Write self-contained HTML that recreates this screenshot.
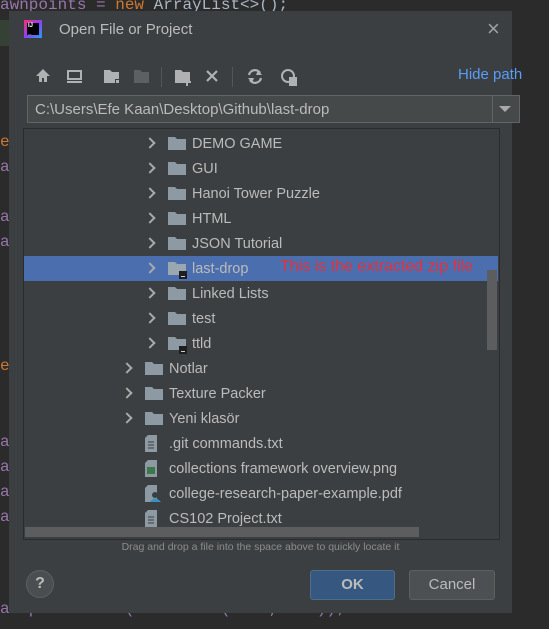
<!DOCTYPE html>
<html><head><style>
body{margin:0;width:549px;height:629px;background:#2b2b2b;position:relative;overflow:hidden;font-family:"Liberation Sans",sans-serif;}
.code{position:absolute;left:0;font-family:"Liberation Mono",monospace;font-size:16px;color:#9876aa;}
.dlg{position:absolute;left:9px;top:11px;width:503px;height:602px;background:#3c3f41;}
.abs{position:absolute;}
.t{position:absolute;color:#bbbbbb;font-size:14px;white-space:nowrap;}
.row{position:absolute;left:0;width:474px;height:25px;}
.row .chev{position:absolute;top:8px;width:6px;height:6px;border-right:2px solid #a9a9a9;border-top:2px solid #a9a9a9;transform:rotate(45deg);}
.row .fold{position:absolute;top:6px;width:18px;height:13px;}
.row .lbl{position:absolute;top:5px;color:#bbbbbb;font-size:14.5px;white-space:nowrap;}
</style></head><body>
<div class="code" style="top:-4px;">awnpoints = <span style="color:#cc7832">new</span> <span style="color:#a9b7c6">ArrayList&lt;&gt;();</span></div>
<div class="abs" style="left:0;top:20px;width:9px;height:26px;background:#344134"></div>
<div class="code" style="top:133px;color:#cc7832">e</div>
<div class="code" style="top:158px">a</div><div class="code" style="top:208px">a</div><div class="code" style="top:233px">a</div>
<div class="code" style="top:357px;color:#cc7832">e</div>
<div class="code" style="top:433px">a</div><div class="code" style="top:458px">a</div><div class="code" style="top:483px">a</div><div class="code" style="top:508px">a</div>
<div class="code" style="top:600px;left:0">awnpoints.add(<span style="color:#cc7832">new</span> Point(-340, 324));</div>
<div class="dlg">
 <div class="abs" style="left:15px;top:9px;width:18px;height:18px;background:linear-gradient(135deg,#ff2d6f,#8f3ff7,#1ea2f5);"><div style="position:absolute;left:3px;top:3px;width:12px;height:12px;background:#000;color:#fff;font-size:6px;font-weight:bold;line-height:7px;padding-left:1px;box-sizing:border-box">IJ<br>_</div></div>
 <div class="t" style="left:50px;top:10px;font-size:15px">Open File or Project</div>
 <div class="t" style="left:478px;top:5px;font-size:22px;color:#a0a0a0">×</div>
 <svg class="abs" style="left:25px;top:54px" width="280" height="24" fill="#afb1b3">
  <path d="M9 4 L2 11 H5 V17 H8 V13 H10 V17 H13 V11 H16Z"/>
  <rect x="34" y="6" width="13" height="8" fill="none" stroke="#afb1b3" stroke-width="2"/><rect x="33" y="16" width="15" height="2"/>
  <path d="M70 5 H76 L78 7 H85 V18 H70Z"/><rect x="81" y="14" width="4" height="4" fill="#3c3f41"/><rect x="82" y="15" width="3" height="3"/>
  <path d="M100 5 H106 L108 7 H115 V18 H100Z" fill="#5d6063"/>
  <rect x="127" y="2" width="1" height="20" fill="#555"/>
  <path d="M141 5 H147 L149 7 H156 V18 H141Z"/><path d="M153 13 V21 M149 17 H157" stroke="#afb1b3" stroke-width="2"/>
  <path d="M173 6 L183 16 M183 6 L173 16" stroke="#afb1b3" stroke-width="2.2"/>
  <rect x="198" y="2" width="1" height="20" fill="#555"/>
  <path d="M215 10 A6 6 0 0 1 226 8 M227 13 A6 6 0 0 1 216 15" stroke="#afb1b3" stroke-width="2.2" fill="none"/><path d="M224 5 L228 10 L222 10Z M218 18 L214 13 L220 13Z"/>
  <circle cx="254" cy="11" r="6" fill="none" stroke="#afb1b3" stroke-width="2"/><rect x="255" y="12" width="8" height="9"/>
 </svg>
 <div class="t" style="left:449px;top:55px;color:#589df6;font-size:15px">Hide path</div>
 <div class="abs" style="left:18px;top:84px;width:493px;height:28px;box-sizing:border-box;border:1px solid #646464;background:#45494a;">
  <div class="t" style="left:7px;top:5px;font-size:15px">C:\Users\Efe Kaan\Desktop\Github\last-drop</div>
  <div class="abs" style="right:0;top:0;width:26px;height:26px;border-left:1px solid #646464"></div>
  <div class="abs" style="right:8px;top:10px;width:0;height:0;border-left:6px solid transparent;border-right:6px solid transparent;border-top:6px solid #a9a9a9"></div>
 </div>
 <div class="abs" style="left:14px;top:117px;width:475px;height:410px;border:1px solid #2b2b2b;background:#3c3f41"></div>
 <div class="abs" style="left:0;top:530px;width:503px;text-align:center;color:#8c8c8c;font-size:10.5px">Drag and drop a file into the space above to quickly locate it</div>
 <div class="abs" style="left:17px;top:559px;width:26px;height:26px;border-radius:50%;background:#4b4e50;border:1px solid #5e6060;color:#bbb;text-align:center;line-height:26px;font-weight:bold;font-size:16px">?</div>
 <div class="abs" style="left:301px;top:559px;width:85px;height:30px;box-sizing:border-box;background:#365880;border:1px solid #4c708c;border-radius:3px;color:#bbbbbb;font-weight:bold;text-align:center;line-height:28px;font-size:15px">OK</div>
 <div class="abs" style="left:400px;top:559px;width:86px;height:30px;box-sizing:border-box;background:#4c5052;border:1px solid #5e6060;border-radius:3px;color:#bbbbbb;text-align:center;line-height:28px;font-size:15px">Cancel</div>
</div>
<div class="abs" style="left:24px;top:131px;width:474px;height:396px;overflow:hidden">
 <div class="abs" style="left:0;top:125px;width:474px;height:25px;background:#4b6eaf"></div>
 <div class="row" style="top:0px"><div class="chev" style="left:122px"></div><svg class="fold" style="left:144px" viewBox="0 0 18 13"><path d="M0 0H7L9 2H18V13H0Z" fill="#8d9aa3"/></svg><div class="lbl" style="left:168px">DEMO GAME</div></div>
 <div class="row" style="top:25px"><div class="chev" style="left:122px"></div><svg class="fold" style="left:144px" viewBox="0 0 18 13"><path d="M0 0H7L9 2H18V13H0Z" fill="#8d9aa3"/></svg><div class="lbl" style="left:168px">GUI</div></div>
 <div class="row" style="top:50px"><div class="chev" style="left:122px"></div><svg class="fold" style="left:144px" viewBox="0 0 18 13"><path d="M0 0H7L9 2H18V13H0Z" fill="#8d9aa3"/></svg><div class="lbl" style="left:168px">Hanoi Tower Puzzle</div></div>
 <div class="row" style="top:75px"><div class="chev" style="left:122px"></div><svg class="fold" style="left:144px" viewBox="0 0 18 13"><path d="M0 0H7L9 2H18V13H0Z" fill="#8d9aa3"/></svg><div class="lbl" style="left:168px">HTML</div></div>
 <div class="row" style="top:100px"><div class="chev" style="left:122px"></div><svg class="fold" style="left:144px" viewBox="0 0 18 13"><path d="M0 0H7L9 2H18V13H0Z" fill="#8d9aa3"/></svg><div class="lbl" style="left:168px">JSON Tutorial</div></div>
 <div class="row" style="top:125px"><div class="chev" style="left:122px"></div><svg class="fold" style="left:144px;width:20px;height:17px" viewBox="0 0 20 17"><path d="M0 0H7L9 2H18V13H0Z" fill="#9aa7b0"/><rect x="11" y="9" width="8" height="8" fill="#1e1e1e"/><rect x="13" y="14" width="4" height="1" fill="#ccc"/></svg><div class="lbl" style="left:168px">last-drop</div></div>
 <div class="row" style="top:150px"><div class="chev" style="left:122px"></div><svg class="fold" style="left:144px" viewBox="0 0 18 13"><path d="M0 0H7L9 2H18V13H0Z" fill="#8d9aa3"/></svg><div class="lbl" style="left:168px">Linked Lists</div></div>
 <div class="row" style="top:175px"><div class="chev" style="left:122px"></div><svg class="fold" style="left:144px" viewBox="0 0 18 13"><path d="M0 0H7L9 2H18V13H0Z" fill="#8d9aa3"/></svg><div class="lbl" style="left:168px">test</div></div>
 <div class="row" style="top:200px"><div class="chev" style="left:122px"></div><svg class="fold" style="left:144px;width:20px;height:17px" viewBox="0 0 20 17"><path d="M0 0H7L9 2H18V13H0Z" fill="#8d9aa3"/><rect x="11" y="9" width="8" height="8" fill="#1e1e1e"/><rect x="13" y="14" width="4" height="1" fill="#ccc"/></svg><div class="lbl" style="left:168px">ttld</div></div>
 <div class="row" style="top:225px"><div class="chev" style="left:99px"></div><svg class="fold" style="left:121px" viewBox="0 0 18 13"><path d="M0 0H7L9 2H18V13H0Z" fill="#8d9aa3"/></svg><div class="lbl" style="left:145px">Notlar</div></div>
 <div class="row" style="top:250px"><div class="chev" style="left:99px"></div><svg class="fold" style="left:121px" viewBox="0 0 18 13"><path d="M0 0H7L9 2H18V13H0Z" fill="#8d9aa3"/></svg><div class="lbl" style="left:145px">Texture Packer</div></div>
 <div class="row" style="top:275px"><div class="chev" style="left:99px"></div><svg class="fold" style="left:121px" viewBox="0 0 18 13"><path d="M0 0H7L9 2H18V13H0Z" fill="#8d9aa3"/></svg><div class="lbl" style="left:145px">Yeni klasör</div></div>
 <div class="row" style="top:300px"><svg class="fold" style="left:121px;top:4px;width:14px;height:17px" viewBox="0 0 14 17"><path d="M3 0H12V17H0V3Z" fill="#8d9aa3"/><path d="M3 7H9M3 10H9M3 13H9" stroke="#3c3f41"/></svg><div class="lbl" style="left:145px">.git commands.txt</div></div>
 <div class="row" style="top:325px"><svg class="fold" style="left:121px;top:4px;width:14px;height:17px" viewBox="0 0 14 17"><path d="M3 0H12V17H0V3Z" fill="#8d9aa3"/><rect x="2" y="7" width="8" height="7" fill="#3a7a4a"/></svg><div class="lbl" style="left:145px">collections framework overview.png</div></div>
 <div class="row" style="top:350px"><svg class="fold" style="left:121px;top:4px;width:16px;height:17px" viewBox="0 0 16 17"><path d="M3 0H12V17H0V3Z" fill="#8d9aa3"/><circle cx="10" cy="10" r="3" fill="#3c3f41"/><path d="M5 17 Q10 10 16 17Z" fill="#3592c4"/></svg><div class="lbl" style="left:145px">college-research-paper-example.pdf</div></div>
 <div class="row" style="top:375px"><svg class="fold" style="left:121px;top:4px;width:14px;height:17px" viewBox="0 0 14 17"><path d="M3 0H12V17H0V3Z" fill="#8d9aa3"/><path d="M3 7H9M3 10H9M3 13H9" stroke="#3c3f41"/></svg><div class="lbl" style="left:145px">CS102 Project.txt</div></div>
 <div class="abs" style="left:256px;top:127px;color:#e8303a;font-size:16px;white-space:nowrap">This is the extracted zip file</div>
 <div class="abs" style="left:463px;top:139px;width:10px;height:80px;background:#5b5d5f"></div>
</div>
<div class="abs" style="left:25px;top:527px;width:394px;height:10px;background:#5b5d5f"></div>
</body></html>
